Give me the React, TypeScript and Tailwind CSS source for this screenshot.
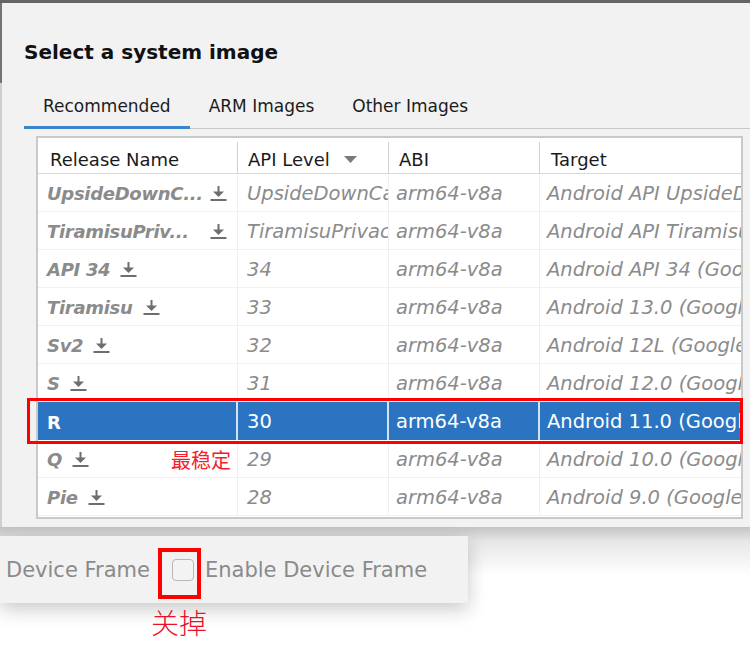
import React from "react";

const rows = [
  { name: "UpsideDownC...", api: "UpsideDownCake", abi: "arm64-v8a", target: "Android API UpsideDownCake (Google APIs)", long: true },
  { name: "TiramisuPriv...", api: "TiramisuPrivacySandbox", abi: "arm64-v8a", target: "Android API TiramisuPrivacySandbox (Google APIs)", long: true },
  { name: "API 34", api: "34", abi: "arm64-v8a", target: "Android API 34 (Google APIs)" },
  { name: "Tiramisu", api: "33", abi: "arm64-v8a", target: "Android 13.0 (Google APIs)" },
  { name: "Sv2", api: "32", abi: "arm64-v8a", target: "Android 12L (Google APIs)" },
  { name: "S", api: "31", abi: "arm64-v8a", target: "Android 12.0 (Google APIs)" },
  { name: "R", api: "30", abi: "arm64-v8a", target: "Android 11.0 (Google APIs)", selected: true },
  { name: "Q", api: "29", abi: "arm64-v8a", target: "Android 10.0 (Google APIs)" },
  { name: "Pie", api: "28", abi: "arm64-v8a", target: "Android 9.0 (Google APIs)" },
];

function DownloadIcon({ right }: { right?: boolean }) {
  return (
    <svg width="17" height="15" viewBox="0 0 17 15" className={right ? "shrink-0 ml-auto" : "shrink-0 ml-[10px]"}>
      <rect x="7.5" y="0" width="2" height="6" fill="#6e6e6e" />
      <polygon points="3,5.5 14,5.5 8.5,11" fill="#6e6e6e" />
      <rect x="0.5" y="13" width="16" height="2" fill="#6e6e6e" />
    </svg>
  );
}

function SortArrow() {
  return (
    <svg width="13" height="7" viewBox="0 0 13 7" className="ml-[14px]">
      <polygon points="0,0 13,0 6.5,7" fill="#7a7a7a" />
    </svg>
  );
}

export default function App() {
  return (
    <div className="relative w-[750px] h-[662px] overflow-hidden bg-white font-['DejaVu_Sans',sans-serif]">
      <div className="h-[3px] bg-[#656565]" />
      <div className="flex h-[524px]">
        <div className="w-[2px] flex flex-col">
          <div className="h-[80px] bg-[#747474]" />
          <div className="flex-1 bg-[#cfcfcf]" />
        </div>
        <div className="flex-1 bg-[#f2f2f2] flex flex-col">
          <div className="mt-[37px] pl-[22px] h-[24px] leading-[24px] text-[20px] font-bold text-[#111]">
            Select a system image
          </div>
          <div className="mt-[31px] ml-[22px] flex border-b border-[#c8c8c8] text-[17px] leading-[20px] text-[#1c1c1c]">
            <div className="px-[19px] pt-[1px] pb-[10px] border-b-[3px] border-[#3d82cc] -mb-px">Recommended</div>
            <div className="px-[19px] pt-[1px] pb-[10px]">ARM Images</div>
            <div className="px-[19px] pt-[1px] pb-[10px]">Other Images</div>
          </div>
          <div className="mt-[7px] ml-[34px] w-[707px] h-[383px] border-2 border-[#c9c9c9] bg-white overflow-hidden">
            <div className="grid grid-cols-[200px_151px_151px_201px] h-[36px] border-b border-[#dadada] text-[18px] text-[#1a1a1a]">
              <div className="flex items-center pl-[12px] pt-[4px] border-r border-[#d0d0d0] my-[4px]">Release Name</div>
              <div className="flex items-center pl-[10px] pt-[4px] border-r border-[#d0d0d0] my-[4px]">
                API Level
                <SortArrow />
              </div>
              <div className="flex items-center pl-[10px] pt-[4px] border-r border-[#d0d0d0] my-[4px]">ABI</div>
              <div className="flex items-center pl-[11px] pt-[4px] my-[4px]">Target</div>
            </div>
            {rows.map((r) =>
              r.selected ? (
                <div
                  key={r.name}
                  className="grid grid-cols-[200px_151px_151px_201px] h-[38px] bg-[#2a74c1] text-white text-[19.5px]"
                >
                  <div className="flex items-center pl-[9px] pt-[2px] text-[18px] font-bold border-r-2 border-white/80 whitespace-nowrap overflow-hidden">
                    {r.name}
                  </div>
                  <div className="flex items-center pl-[9px] pt-[2px] border-r-2 border-white/80 whitespace-nowrap overflow-hidden">
                    {r.api}
                  </div>
                  <div className="flex items-center pl-[7px] pt-[2px] border-r-2 border-white/80 whitespace-nowrap overflow-hidden">
                    {r.abi}
                  </div>
                  <div className="flex items-center pl-[7px] pt-[2px] whitespace-nowrap overflow-hidden">{r.target}</div>
                </div>
              ) : (
                <div
                  key={r.name}
                  className="grid grid-cols-[200px_151px_151px_201px] h-[38px] border-b border-[#f1f1f1] text-[19.5px] italic text-[#8b8b8b]"
                >
                  <div className="flex items-center pl-[9px] pr-[10px] pt-[2px] border-r border-[#efefef] min-w-0">
                    <span className="font-bold text-[18px] tracking-[-0.3px] whitespace-nowrap">{r.name}</span>
                    <DownloadIcon right={r.long} />
                  </div>
                  <div className="flex items-center pl-[9px] pt-[2px] border-r border-[#efefef] whitespace-nowrap overflow-hidden">
                    {r.api}
                  </div>
                  <div className="flex items-center pl-[7px] pt-[2px] border-r border-[#efefef] whitespace-nowrap overflow-hidden">
                    {r.abi}
                  </div>
                  <div className="flex items-center pl-[7px] pt-[2px] whitespace-nowrap overflow-hidden">{r.target}</div>
                </div>
              )
            )}
          </div>
        </div>
      </div>
      <div className="h-[135px] pt-[9px] bg-[linear-gradient(to_bottom,#c4c4c4_0px,#e6e6e6_14px,#ffffff_48px)]">
        <div className="w-[468px] h-[67px] bg-[#f2f2f2] shadow-[0_6px_18px_rgba(0,0,0,0.22)] flex items-center pl-[6px] pt-[3px] text-[21px] text-[#8a8a8a]">
          <span>Device Frame</span>
          <div className="ml-[22px] -mt-[3px] w-[22px] h-[22px] rounded-[4px] border-[1.5px] border-[#b8b8b8] bg-[#f3f3f3]" />
          <span className="ml-[11px]">Enable Device Frame</span>
        </div>
      </div>

      <div className="absolute left-[27px] top-[398px] w-[716px] h-[46px] border-[3px] border-[#ff0000]" />
      <div className="absolute left-[171px] top-[448px] text-[20px] leading-[24px] text-[#f2202c] font-['Noto_Sans_CJK_SC',sans-serif]">
        最稳定
      </div>
      <div className="absolute left-[158px] top-[548px] w-[43px] h-[51px] border-4 border-[#ff0000]" />
      <div className="absolute left-[151px] top-[604px] text-[28px] leading-[36px] font-light text-[#e8102a] font-['Noto_Sans_CJK_SC',sans-serif]">
        关掉
      </div>
    </div>
  );
}
